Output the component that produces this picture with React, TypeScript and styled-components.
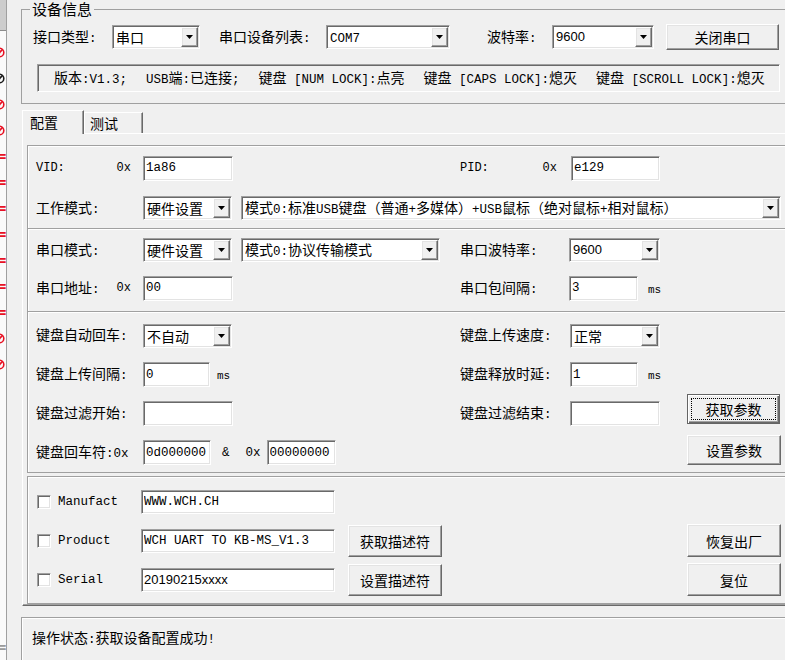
import React from 'react';
import styled, { createGlobalStyle, css } from 'styled-components';

const GlobalStyle = createGlobalStyle`
  html, body { margin: 0; padding: 0; overflow: hidden; background: #f0f0f0; }
  body {
    font-family: "Noto Sans CJK SC", "Liberation Sans", sans-serif;
    font-size: 14px;
    line-height: 16px;
    color: #000;
  }
  * { box-sizing: border-box; }
`;

const sunken = css`
  border: 1px solid;
  border-color: #a0a0a0 #ffffff #ffffff #a0a0a0;
  box-shadow: inset 1px 1px #696969, inset -1px -1px #e3e3e3;
`;

const raised = css`
  border: 1px solid;
  border-color: #ffffff #696969 #696969 #ffffff;
  box-shadow: inset -1px -1px #a0a0a0, inset 1px 1px #e3e3e3;
`;

const Mono = styled.span<{ $size?: number }>`
  font-family: "Liberation Mono", "DejaVu Sans Mono", monospace;
  font-size: ${({ $size }) => $size ?? 12.5}px;
  white-space: pre;
`;

// wraps the ascii runs in a mono span, so mixed text has the old SimSun widths
function Txt({ s }: { s: string }) {
  const parts = s.split(/([\x20-\x7e]+)/).filter(Boolean);
  return (
    <span>
      {parts.map((p, i) =>
        /^[\x20-\x7e]+$/.test(p) ? <Mono key={i}>{p}</Mono> : <span key={i}>{p}</span>
      )}
    </span>
  );
}

/* ---------- left strip (window behind) ---------- */

const Page = styled.div`
  display: flex;
  width: 785px;
  height: 660px;
  overflow: hidden;
  background: #f0f0f0;
`;

const SideStrip = styled.div`
  flex: none;
  width: 7px;
  height: 100%;
  background: #fafafa;
  border-right: 1px solid #a0a0a0;
  overflow: hidden;
  display: flex;
  flex-direction: column;
`;

const StripThumb = styled.div`
  flex: none;
  height: 31px;
  background: #cdcdcd;
  border-bottom: 1px solid #8c8c8c;
  margin-bottom: 8px;
`;

const MarkRow = styled.div<{ $color: string; $foot?: boolean }>`
  flex: none;
  height: 26px;
  display: flex;
  align-items: center;
  margin-left: -6px;
  margin-top: ${({ $foot }) => ($foot ? 'auto' : '0')};
  font-family: "DejaVu Sans", sans-serif;
  font-size: 16px;
  font-weight: bold;
  white-space: nowrap;
  color: ${({ $color }) => $color};
`;

function BlockedIcon() {
  return (
    <svg width="11" height="11" viewBox="0 0 11 11">
      <circle cx="5.5" cy="5.5" r="4.3" fill="none" stroke="currentColor" strokeWidth="1.6" />
      <path d="M2.4 8.6L8.6 2.4" stroke="currentColor" strokeWidth="1.6" />
    </svg>
  );
}

const RED = '#e81123';
const marks: [string, string][] = [
  ['o', RED], ['o', '#1a1a1a'], ['o', RED], ['o', RED],
  ['=', RED], ['=', RED], ['=', RED], ['=', RED], ['=', RED], ['=', RED], ['=', RED],
  ['o', RED], ['o', RED],
];

/* ---------- window ---------- */

const Window = styled.div`
  flex: none;
  width: 784px;
  padding-left: 14px;
  display: flex;
  flex-direction: column;
`;

const GroupBox = styled.fieldset`
  margin: 0;
  padding: 4px 0 11px 0;
  min-width: 0;
  border: 1px solid #a0a0a0;
`;

const GroupTitle = styled.legend`
  margin-left: 8px;
  padding: 0 2px;
  font-size: 15px;
  line-height: 18px;
`;

const TopRow = styled.div`
  display: grid;
  grid-template-columns: 79px 107px 107px 161px 65px 114px 113px;
  align-items: center;
  height: 30px;
  padding-left: 11px;
`;

const InfoBox = styled.div`
  margin: 12px 0 0 15px;
  width: 743px;
  height: 28px;
  border: 1px solid;
  border-color: #a0a0a0 #ffffff #ffffff #a0a0a0;
  box-shadow: inset 1px 1px #696969;
  padding-left: 16px;
  display: flex;
  align-items: center;
  white-space: pre;
`;

const Gap = styled.span`
  display: inline-block;
  width: 19px;
`;

const Label = styled.span`
  white-space: nowrap;
`;

/* ---------- controls ---------- */

const Field = styled.input<{ $w: number; $h?: number; $sans?: boolean }>`
  width: ${({ $w }) => $w}px;
  height: ${({ $h }) => $h ?? 25}px;
  margin: 0;
  padding: 0 2px;
  ${sunken};
  background: #fff;
  outline: none;
  color: #000;
  font-family: ${({ $sans }) => ($sans ? '"Liberation Sans", sans-serif' : '"Liberation Mono", monospace')};
  font-size: ${({ $sans }) => ($sans ? 13 : 12.5)}px;
`;

const ComboBox = styled.div<{ $w?: number }>`
  ${({ $w }) => ($w ? `width: ${$w}px; flex: none;` : 'flex: 1;')}
  height: 24px;
  ${sunken};
  background: #fff;
  padding: 1px;
  display: flex;
  align-items: center;
`;

const ComboValue = styled.span<{ $sans?: boolean }>`
  flex: 1;
  padding-left: 2px;
  white-space: nowrap;
  overflow: hidden;
  ${({ $sans }) => $sans && 'font-family: "Liberation Sans", sans-serif; font-size: 13px;'}
`;

const DropButton = styled.span`
  flex: none;
  width: 17px;
  height: 100%;
  ${raised};
  background: #f0f0f0;
  display: flex;
  align-items: center;
  justify-content: center;
`;

function Combo({ w, value, sans }: { w?: number; value: string; sans?: boolean }) {
  return (
    <ComboBox $w={w}>
      <ComboValue $sans={sans}>{sans ? value : <Txt s={value} />}</ComboValue>
      <DropButton>
        <svg width="7" height="4" viewBox="0 0 7 4">
          <path d="M0 0h7L3.5 4z" fill="#000" />
        </svg>
      </DropButton>
    </ComboBox>
  );
}

const WinButton = styled.button<{ $w: number; $h: number; $default?: boolean }>`
  position: relative;
  width: ${({ $w }) => $w}px;
  height: ${({ $h }) => $h}px;
  margin: 0;
  padding: 0;
  background: #f0f0f0;
  font: inherit;
  color: #000;
  ${({ $default }) =>
    $default
      ? css`
          border: 1px solid #646464;
          box-shadow: inset 1px 1px #ffffff, inset -1px -1px #696969, inset -2px -2px #a0a0a0;
          &::after {
            content: '';
            position: absolute;
            inset: 3px;
            border: 1px dotted #000;
          }
        `
      : raised}
`;

const CheckBox = styled.span`
  flex: none;
  width: 14px;
  height: 14px;
  ${sunken};
  background: #fff;
`;

/* ---------- tabs ---------- */

const TabStrip = styled.div`
  display: flex;
  align-items: flex-end;
  height: 23px;
  margin: 6px 0 0 1px;
  position: relative;
  z-index: 1;
`;

const Tab = styled.div<{ $active?: boolean; $w: number }>`
  width: ${({ $w }) => $w}px;
  height: ${({ $active }) => ($active ? 24 : 21)}px;
  margin-bottom: ${({ $active }) => ($active ? -1 : 0)}px;
  padding: ${({ $active }) => ($active ? '3px 0 0 7px' : '2px 0 0 5px')};
  border: 1px solid;
  border-bottom: 0;
  border-color: #ffffff #696969 #696969 #ffffff;
  box-shadow: inset -1px 0 #a0a0a0;
  background: #f0f0f0;
`;

const TabPanel = styled.div`
  margin-left: 1px;
  border-top: 1px solid #fff;
  border-left: 1px solid #fff;
  border-bottom: 1px solid #696969;
  box-shadow: inset 0 -1px #a0a0a0;
  padding: 11px 0 1px 4px;
`;

const ParamBox = styled.div<{ $gap?: number }>`
  margin-top: ${({ $gap }) => $gap ?? 0}px;
  border: 1px solid #a0a0a0;
  box-shadow: inset 1px 1px #fff;
`;

const Section = styled.div<{ $rows: string; $pt: number; $pb: number }>`
  display: grid;
  grid-template-columns: 107px 317px 109px 118px 94px;
  grid-template-rows: ${({ $rows }) => $rows};
  align-items: center;
  padding: ${({ $pt, $pb }) => `${$pt}px 0 ${$pb}px 8px`};

  & + & {
    border-top: 1px solid #a0a0a0;
    box-shadow: inset 0 1px #fff;
  }
`;

const DescSection = styled(Section)`
  grid-template-columns: 104px 207px 339px 94px;
  padding-left: 9px;
`;

const LabelCell = styled.div<{ $split?: boolean }>`
  display: flex;
  align-items: center;
  justify-content: ${({ $split }) => ($split ? 'space-between' : 'flex-start')};
  padding-right: ${({ $split }) => ($split ? 12 : 0)}px;
  white-space: nowrap;
`;

const Cell = styled.div<{ $span?: string; $indent?: number; $gap?: number }>`
  display: flex;
  align-items: center;
  gap: ${({ $gap }) => $gap ?? 0}px;
  padding-left: ${({ $indent }) => $indent ?? 0}px;
  ${({ $span }) => $span && `grid-column: ${$span};`}
`;

const Unit = styled(Mono)<{ $ml: number }>`
  margin-left: ${({ $ml }) => $ml}px;
  font-size: 11px;
  padding-top: 3px;
`;

const Amp = styled(Mono)<{ $ml: number }>`
  margin-left: ${({ $ml }) => $ml}px;
`;

const ButtonStack = styled.div`
  grid-column: 5;
  grid-row: 3 / 5;
  align-self: stretch;
  display: flex;
  flex-direction: column;
  justify-content: flex-end;
  gap: 11px;
  padding-bottom: 7px;
`;

const CheckCell = styled.label`
  display: flex;
  align-items: center;
  gap: 7px;
`;

const StatusBar = styled.div`
  margin-top: 11px;
  height: 50px;
  border-top: 1px solid #a0a0a0;
  border-left: 1px solid #a0a0a0;
  box-shadow: inset 1px 1px #fff;
  padding: 11px 0 0 10px;
`;

export default function App() {
  return (
    <>
      <GlobalStyle />
      <Page>
        <SideStrip>
          <StripThumb />
          {marks.map(([kind, color], i) => (
            <MarkRow key={i} $color={color}>
              {kind === 'o' ? <BlockedIcon /> : '='}
            </MarkRow>
          ))}
          <MarkRow $color="#9a9a9a" $foot>=</MarkRow>
        </SideStrip>

        <Window>
          <GroupBox>
            <GroupTitle>设备信息</GroupTitle>
            <TopRow>
              <Label><Txt s="接口类型:" /></Label>
              <Combo w={88} value="串口" />
              <Label><Txt s="串口设备列表:" /></Label>
              <Combo w={124} value="COM7" />
              <Label><Txt s="波特率:" /></Label>
              <Combo w={102} value="9600" sans />
              <WinButton $w={113} $h={26}>关闭串口</WinButton>
            </TopRow>
            <InfoBox>
              <Txt s="版本:V1.3;" /><Gap />
              <Txt s="USB端:已连接;" /><Gap />
              <Txt s="键盘 [NUM LOCK]:点亮" /><Gap />
              <Txt s="键盘 [CAPS LOCK]:熄灭" /><Gap />
              <Txt s="键盘 [SCROLL LOCK]:熄灭" />
            </InfoBox>
          </GroupBox>

          <TabStrip>
            <Tab $active $w={62}>配置</Tab>
            <Tab $w={59}>测试</Tab>
          </TabStrip>

          <TabPanel>
            <ParamBox>
              <Section $rows="40px 40px" $pt={2} $pb={0}>
                <LabelCell $split><Mono $size={12}>VID:</Mono><Mono $size={12}>0x</Mono></LabelCell>
                <Cell><Field $w={90} defaultValue="1a86" readOnly /></Cell>
                <LabelCell $split><Mono $size={12}>PID:</Mono><Mono $size={12}>0x</Mono></LabelCell>
                <Cell $indent={2}><Field $w={89} defaultValue="e129" readOnly /></Cell>
                <span />

                <LabelCell><Txt s="工作模式:" /></LabelCell>
                <Cell $span="2 / 6" $gap={9}>
                  <Combo w={89} value="硬件设置" />
                  <Combo value="模式0:标准USB键盘（普通+多媒体）+USB鼠标（绝对鼠标+相对鼠标）" />
                </Cell>
              </Section>

              <Section $rows="38px 38px" $pt={2} $pb={4}>
                <LabelCell><Txt s="串口模式:" /></LabelCell>
                <Cell $gap={9}>
                  <Combo w={89} value="硬件设置" />
                  <Combo w={199} value="模式0:协议传输模式" />
                </Cell>
                <LabelCell><Txt s="串口波特率:" /></LabelCell>
                <Cell><Combo w={91} value="9600" sans /></Cell>
                <span />

                <LabelCell $split><Txt s="串口地址:" /><Mono $size={12}>0x</Mono></LabelCell>
                <Cell><Field $w={90} defaultValue="00" readOnly /></Cell>
                <LabelCell><Txt s="串口包间隔:" /></LabelCell>
                <Cell><Field $w={69} defaultValue="3" readOnly /><Unit $ml={10}>ms</Unit></Cell>
                <span />
              </Section>

              <Section $rows="39px 39px 39px 39px" $pt={4} $pb={0}>
                <ButtonStack>
                  <WinButton $w={93} $h={33} $default>获取参数</WinButton>
                  <WinButton $w={94} $h={32}>设置参数</WinButton>
                </ButtonStack>

                <LabelCell><Txt s="键盘自动回车:" /></LabelCell>
                <Cell><Combo w={89} value="不自动" /></Cell>
                <LabelCell><Txt s="键盘上传速度:" /></LabelCell>
                <Cell $indent={1}><Combo w={90} value="正常" /></Cell>
                <span />

                <LabelCell><Txt s="键盘上传间隔:" /></LabelCell>
                <Cell><Field $w={67} defaultValue="0" readOnly /><Unit $ml={7}>ms</Unit></Cell>
                <LabelCell><Txt s="键盘释放时延:" /></LabelCell>
                <Cell $indent={1}><Field $w={68} defaultValue="1" readOnly /><Unit $ml={10}>ms</Unit></Cell>
                <span />

                <LabelCell><Txt s="键盘过滤开始:" /></LabelCell>
                <Cell><Field $w={90} defaultValue="" readOnly /></Cell>
                <LabelCell><Txt s="键盘过滤结束:" /></LabelCell>
                <Cell $indent={1}><Field $w={90} defaultValue="" readOnly /></Cell>

                <LabelCell><Txt s="键盘回车符:0x" /></LabelCell>
                <Cell>
                  <Field $w={68} defaultValue="0d000000" readOnly />
                  <Amp $ml={11}>&amp;</Amp>
                  <Amp $ml={16}>0x</Amp>
                  <Amp $ml={6} as="span">
                    <Field $w={69} defaultValue="00000000" readOnly />
                  </Amp>
                </Cell>
              </Section>
            </ParamBox>

            <ParamBox $gap={3}>
              <DescSection $rows="39px 39px 39px" $pt={5} $pb={4}>
                <CheckCell><CheckBox /><Mono>Manufact</Mono></CheckCell>
                <Cell><Field $w={194} $h={24} defaultValue="WWW.WCH.CH" readOnly /></Cell>
                <span />
                <span />

                <CheckCell><CheckBox /><Mono>Product</Mono></CheckCell>
                <Cell><Field $w={194} $h={24} defaultValue="WCH UART TO KB-MS_V1.3" readOnly /></Cell>
                <Cell><WinButton $w={94} $h={32}>获取描述符</WinButton></Cell>
                <Cell><WinButton $w={94} $h={33}>恢复出厂</WinButton></Cell>

                <CheckCell><CheckBox /><Mono>Serial</Mono></CheckCell>
                <Cell><Field $w={194} $h={24} $sans defaultValue="20190215xxxx" readOnly /></Cell>
                <Cell><WinButton $w={94} $h={32}>设置描述符</WinButton></Cell>
                <Cell><WinButton $w={94} $h={33}>复位</WinButton></Cell>
              </DescSection>
            </ParamBox>
          </TabPanel>

          <StatusBar>
            <Txt s="操作状态:获取设备配置成功!" />
          </StatusBar>
        </Window>
      </Page>
    </>
  );
}
